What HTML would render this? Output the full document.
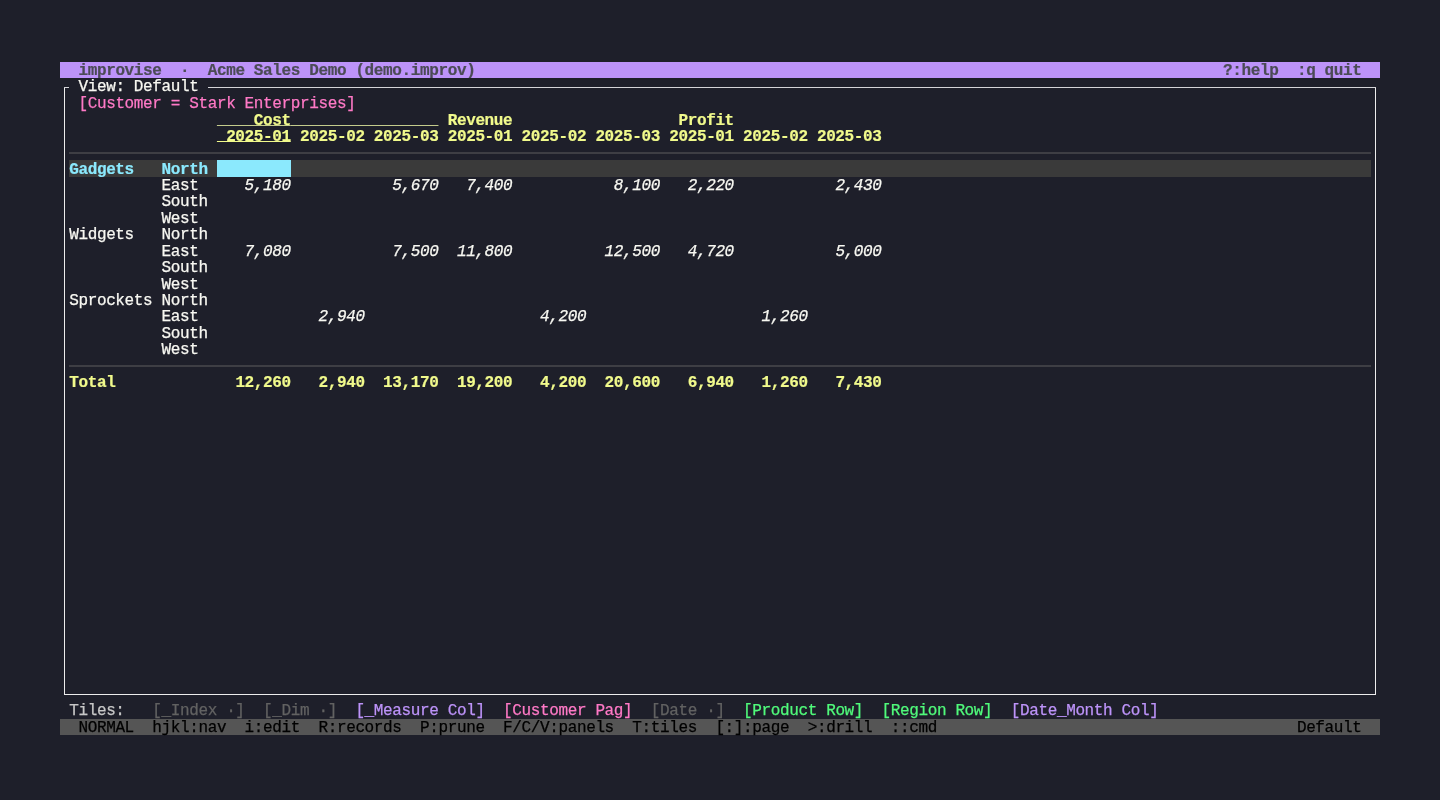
<!DOCTYPE html><html><head><meta charset="utf-8"><style>
html,body{margin:0;padding:0;}
body{width:1440px;height:800px;overflow:hidden;background:#1e1f2a;position:relative;font-family:"Liberation Mono",monospace;font-size:16.0px;letter-spacing:-0.3707px}
.t{position:absolute;white-space:pre;-webkit-text-stroke:0.25px currentColor;line-height:16.425px;height:16.425px;}
.b{font-weight:bold;-webkit-text-stroke:0.2px currentColor}.i{font-style:italic}.u{text-decoration:underline;text-underline-offset:0px;text-decoration-thickness:1px}
.r{position:absolute}
#tl{position:absolute;left:0;top:0;width:1440px;height:800px;will-change:transform}
</style></head><body>
<div class="r" style="left:60.00px;top:62.00px;width:1320.00px;height:16.00px;background:#bd93f9"></div>
<div class="r" style="left:69.23px;top:160.00px;width:1301.54px;height:17.00px;background:#3a3a3a"></div>
<div class="r" style="left:216.92px;top:160.00px;width:73.85px;height:17.00px;background:#8be9fd"></div>
<div class="r" style="left:60.00px;top:719.00px;width:1320.00px;height:16.00px;background:#555555"></div>
<div class="r" style="left:64px;top:87px;width:1px;height:608px;background:#ececec"></div>
<div class="r" style="left:1375px;top:87px;width:1px;height:608px;background:#ececec"></div>
<div class="r" style="left:64px;top:694px;width:1312px;height:1px;background:#ececec"></div>
<div class="r" style="left:64px;top:87px;width:5px;height:1px;background:#d4d4d8"></div>
<div class="r" style="left:208px;top:87px;width:1168px;height:1px;background:#d4d4d8"></div>
<div class="r" style="left:69.23px;top:152px;width:1301.54px;height:2px;background:#3e3e44"></div>
<div class="r" style="left:69.23px;top:365px;width:1301.54px;height:2px;background:#3e3e44"></div>
<div id="tl">
<div class="t b" style="left:78.46px;top:63.00px;color:#4b4b55;">improvise</div>
<div class="t b" style="left:180.00px;top:63.00px;color:#4b4b55;">·</div>
<div class="t b" style="left:207.69px;top:63.00px;color:#4b4b55;">Acme Sales Demo (demo.improv)</div>
<div class="t b" style="left:1223.08px;top:63.00px;color:#4b4b55;">?:help  :q quit</div>
<div class="t" style="left:78.46px;top:79.00px;color:#f8f8f2;">View: Default</div>
<div class="t" style="left:78.46px;top:96.00px;color:#ff79c6;">[Customer = Stark Enterprises]</div>
<div class="t b u" style="left:216.92px;top:113.00px;color:#f1fa8c;text-decoration-color:#c4cb8c">    Cost</div>
<div class="t b u" style="left:290.77px;top:113.00px;color:#f1fa8c;text-decoration-color:#c4cb8c">                </div>
<div class="t b" style="left:447.69px;top:113.00px;color:#f1fa8c;">Revenue</div>
<div class="t b" style="left:678.46px;top:113.00px;color:#f1fa8c;">Profit</div>
<div class="t b u" style="left:216.92px;top:129.00px;color:#f1fa8c;"> 2025-01</div>
<div class="t b" style="left:300.00px;top:129.00px;color:#f1fa8c;">2025-02</div>
<div class="t b" style="left:373.85px;top:129.00px;color:#f1fa8c;">2025-03</div>
<div class="t b" style="left:447.69px;top:129.00px;color:#f1fa8c;">2025-01</div>
<div class="t b" style="left:521.54px;top:129.00px;color:#f1fa8c;">2025-02</div>
<div class="t b" style="left:595.38px;top:129.00px;color:#f1fa8c;">2025-03</div>
<div class="t b" style="left:669.23px;top:129.00px;color:#f1fa8c;">2025-01</div>
<div class="t b" style="left:743.08px;top:129.00px;color:#f1fa8c;">2025-02</div>
<div class="t b" style="left:816.92px;top:129.00px;color:#f1fa8c;">2025-03</div>
<div class="t b" style="left:69.23px;top:162.00px;color:#8be9fd;">Gadgets</div>
<div class="t b" style="left:161.54px;top:162.00px;color:#8be9fd;">North</div>
<div class="t" style="left:161.54px;top:178.00px;color:#f8f8f2;">East</div>
<div class="t" style="left:161.54px;top:194.00px;color:#f8f8f2;">South</div>
<div class="t" style="left:161.54px;top:211.00px;color:#f8f8f2;">West</div>
<div class="t" style="left:69.23px;top:227.00px;color:#f8f8f2;">Widgets</div>
<div class="t" style="left:161.54px;top:227.00px;color:#f8f8f2;">North</div>
<div class="t" style="left:161.54px;top:244.00px;color:#f8f8f2;">East</div>
<div class="t" style="left:161.54px;top:260.00px;color:#f8f8f2;">South</div>
<div class="t" style="left:161.54px;top:277.00px;color:#f8f8f2;">West</div>
<div class="t" style="left:69.23px;top:293.00px;color:#f8f8f2;">Sprockets</div>
<div class="t" style="left:161.54px;top:293.00px;color:#f8f8f2;">North</div>
<div class="t" style="left:161.54px;top:309.00px;color:#f8f8f2;">East</div>
<div class="t" style="left:161.54px;top:326.00px;color:#f8f8f2;">South</div>
<div class="t" style="left:161.54px;top:342.00px;color:#f8f8f2;">West</div>
<div class="t i" style="left:244.62px;top:178.00px;color:#f8f8f2;">5,180</div>
<div class="t i" style="left:392.31px;top:178.00px;color:#f8f8f2;">5,670</div>
<div class="t i" style="left:466.15px;top:178.00px;color:#f8f8f2;">7,400</div>
<div class="t i" style="left:613.85px;top:178.00px;color:#f8f8f2;">8,100</div>
<div class="t i" style="left:687.69px;top:178.00px;color:#f8f8f2;">2,220</div>
<div class="t i" style="left:835.38px;top:178.00px;color:#f8f8f2;">2,430</div>
<div class="t i" style="left:244.62px;top:244.00px;color:#f8f8f2;">7,080</div>
<div class="t i" style="left:392.31px;top:244.00px;color:#f8f8f2;">7,500</div>
<div class="t i" style="left:456.92px;top:244.00px;color:#f8f8f2;">11,800</div>
<div class="t i" style="left:604.62px;top:244.00px;color:#f8f8f2;">12,500</div>
<div class="t i" style="left:687.69px;top:244.00px;color:#f8f8f2;">4,720</div>
<div class="t i" style="left:835.38px;top:244.00px;color:#f8f8f2;">5,000</div>
<div class="t i" style="left:318.46px;top:309.00px;color:#f8f8f2;">2,940</div>
<div class="t i" style="left:540.00px;top:309.00px;color:#f8f8f2;">4,200</div>
<div class="t i" style="left:761.54px;top:309.00px;color:#f8f8f2;">1,260</div>
<div class="t b" style="left:69.23px;top:375.00px;color:#f1fa8c;">Total</div>
<div class="t b" style="left:235.38px;top:375.00px;color:#f1fa8c;">12,260</div>
<div class="t b" style="left:318.46px;top:375.00px;color:#f1fa8c;">2,940</div>
<div class="t b" style="left:383.08px;top:375.00px;color:#f1fa8c;">13,170</div>
<div class="t b" style="left:456.92px;top:375.00px;color:#f1fa8c;">19,200</div>
<div class="t b" style="left:540.00px;top:375.00px;color:#f1fa8c;">4,200</div>
<div class="t b" style="left:604.62px;top:375.00px;color:#f1fa8c;">20,600</div>
<div class="t b" style="left:687.69px;top:375.00px;color:#f1fa8c;">6,940</div>
<div class="t b" style="left:761.54px;top:375.00px;color:#f1fa8c;">1,260</div>
<div class="t b" style="left:835.38px;top:375.00px;color:#f1fa8c;">7,430</div>
<div class="t" style="left:69.23px;top:703.00px;color:#c8c8c8;">Tiles:</div>
<div class="t" style="left:152.31px;top:703.00px;color:#626262;">[_Index ·]</div>
<div class="t" style="left:263.08px;top:703.00px;color:#626262;">[_Dim ·]</div>
<div class="t" style="left:355.38px;top:703.00px;color:#bd93f9;">[_Measure Col]</div>
<div class="t" style="left:503.08px;top:703.00px;color:#ff79c6;">[Customer Pag]</div>
<div class="t" style="left:650.77px;top:703.00px;color:#626262;">[Date ·]</div>
<div class="t" style="left:743.08px;top:703.00px;color:#50fa7b;">[Product Row]</div>
<div class="t" style="left:881.54px;top:703.00px;color:#50fa7b;">[Region Row]</div>
<div class="t" style="left:1010.77px;top:703.00px;color:#bd93f9;">[Date_Month Col]</div>
<div class="t" style="left:78.46px;top:720.00px;color:#000000;">NORMAL</div>
<div class="t" style="left:152.31px;top:720.00px;color:#000000;">hjkl:nav</div>
<div class="t" style="left:244.62px;top:720.00px;color:#000000;">i:edit</div>
<div class="t" style="left:318.46px;top:720.00px;color:#000000;">R:records</div>
<div class="t" style="left:420.00px;top:720.00px;color:#000000;">P:prune</div>
<div class="t" style="left:503.08px;top:720.00px;color:#000000;">F/C/V:panels</div>
<div class="t" style="left:632.31px;top:720.00px;color:#000000;">T:tiles</div>
<div class="t" style="left:715.38px;top:720.00px;color:#000000;">[:]:page</div>
<div class="t" style="left:807.69px;top:720.00px;color:#000000;">&gt;:drill</div>
<div class="t" style="left:890.77px;top:720.00px;color:#000000;">::cmd</div>
<div class="t" style="left:1296.92px;top:720.00px;color:#000000;">Default</div>
</div>
</body></html>
